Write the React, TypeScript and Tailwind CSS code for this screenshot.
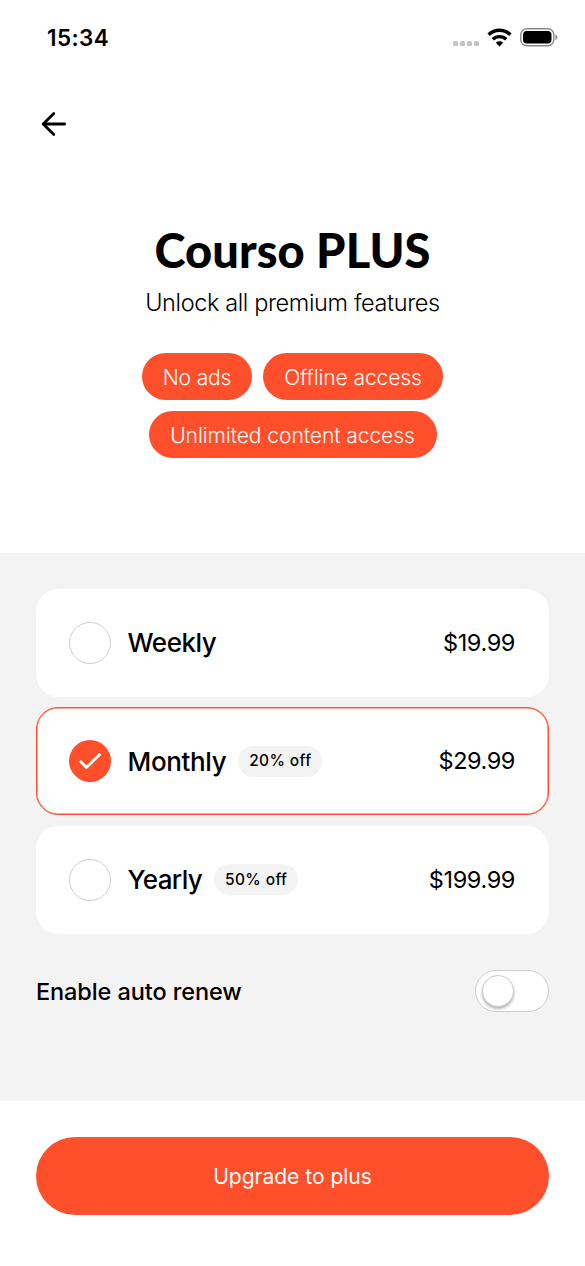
import { useState } from "react";

type Plan = {
  id: string;
  name: string;
  price: string;
  discount?: string;
  nameClass: string;
  priceClass: string;
};

const FEATURES = [
  { label: "No ads", box: "w-[110px]", text: "tracking-[-0.15px]" },
  { label: "Offline access", box: "w-[180px]", text: "tracking-[-0.1px]" },
  { label: "Unlimited content access", box: "w-[288px]", text: "tracking-[-0.05px]" },
];

const PLANS: Plan[] = [
  { id: "weekly", name: "Weekly", price: "$19.99", nameClass: "tracking-[-0.45px]", priceClass: "tracking-[-0.4px]" },
  { id: "monthly", name: "Monthly", price: "$29.99", discount: "20% off", nameClass: "tracking-[-0.35px]", priceClass: "tracking-[-0.45px]" },
  { id: "yearly", name: "Yearly", price: "$199.99", discount: "50% off", nameClass: "tracking-[-0.6px]", priceClass: "tracking-[-0.4px]" },
];

export default function App() {
  const [selected, setSelected] = useState("monthly");
  const [autoRenew, setAutoRenew] = useState(false);

  return (
    <div className="flex h-[1266px] w-[585px] flex-col overflow-hidden bg-white font-['Inter',sans-serif] text-black">
      <StatusBar />

      <div className="flex h-[98px] items-center px-[41px]">
        <button aria-label="Back">
          <svg width="26" height="26" viewBox="0 0 26 26" fill="none" stroke="currentColor" strokeWidth="2.8" strokeLinecap="round" strokeLinejoin="round">
            <path d="M23.6 13H2.2M12.8 2.4L2.2 13l10.6 10.6" />
          </svg>
        </button>
      </div>

      <header className="flex h-[380px] flex-col items-center pt-[49px]">
        <h1 className="font-['Lato',sans-serif] text-[47px] leading-[56px] font-black tracking-[0.1px] whitespace-nowrap">Courso PLUS</h1>
        <p className="mt-[10px] text-[23.5px] leading-[30px] font-light tracking-[-0.38px] whitespace-nowrap">Unlock all premium features</p>
        <div className="mt-[35px] flex w-[320px] flex-wrap justify-center gap-x-[11px] gap-y-[11px]">
          {FEATURES.map((f) => (
            <div key={f.label} className={`flex h-[47px] items-center justify-center rounded-full bg-[#ff4f2b] pt-[2px] ${f.box}`}>
              <span className={`text-[21px] font-light whitespace-nowrap text-white ${f.text}`}>{f.label}</span>
            </div>
          ))}
        </div>
      </header>

      <section className="h-[548px] bg-[#f3f3f3] px-[36px] pt-[35.5px]">
        <div className="flex flex-col gap-[10.5px]">
          {PLANS.map((plan) => (
            <PlanCard key={plan.id} plan={plan} active={selected === plan.id} onSelect={() => setSelected(plan.id)} />
          ))}
        </div>

        <div className="mt-[36.5px] flex items-center justify-between">
          <span className="pt-[2px] text-[23.5px] font-medium tracking-[-0.1px]">Enable auto renew</span>
          <Toggle on={autoRenew} onChange={setAutoRenew} />
        </div>
      </section>

      <footer className="px-[36px] pt-[36px]">
        <button className="flex h-[78px] w-full items-center justify-center rounded-full bg-[#ff4f2b] pt-[2px]">
          <span className="text-[21px] text-white">Upgrade to plus</span>
        </button>
      </footer>
    </div>
  );
}

function StatusBar() {
  return (
    <div className="flex h-[75px] items-center justify-between pr-[27px] pl-[47px]">
      <span className="text-[22.5px] font-semibold tracking-[0.4px]">15:34</span>
      <div className="flex items-center">
        <div className="mt-[12px] mr-[8px] flex gap-[2.3px]">
          {[0, 1, 2, 3].map((i) => (
            <span key={i} className="size-[4.8px] rounded-[1.5px] bg-[#c4c4c4]" />
          ))}
        </div>
        <svg width="25" height="19" viewBox="0 0 25 19" className="mr-[8px]" fill="none" stroke="#000" strokeWidth="3.4">
          <path d="M1.6 6.7a15.6 15.6 0 0 1 21.8 0M5.8 11.3a9.7 9.7 0 0 1 13.4 0" />
          <path d="M8.8 14.8a5.4 5.4 0 0 1 7.4 0L12.5 18.4z" fill="#000" stroke="none" />
        </svg>
        <svg width="38" height="19" viewBox="0 0 38 19" fill="none">
          <rect x="0.8" y="0.8" width="33" height="16.9" rx="5.8" stroke="#8a8a8a" strokeWidth="1.4" />
          <rect x="3" y="3" width="28.5" height="12.5" rx="3.8" fill="#000" />
          <path d="M35.4 6.6c2.5.8 2.5 4.8 0 5.6z" fill="#8a8a8a" />
        </svg>
      </div>
    </div>
  );
}

function PlanCard({ plan, active, onSelect }: { plan: Plan; active: boolean; onSelect: () => void }) {
  return (
    <button
      onClick={onSelect}
      className={`flex h-[108px] w-full items-center rounded-[22px] border bg-white pr-[33px] pl-[32px] ${
        active ? "border-[#ff4f2b] shadow-[inset_0_0_0_0.5px_#ff4f2b]" : "border-white"
      }`}
    >
      {active ? (
        <span className="flex size-[42px] items-center justify-center rounded-full bg-[#ff4f2b]">
          <svg width="24" height="20" viewBox="0 0 24 20" fill="none" stroke="#fff" strokeWidth="2.8" strokeLinecap="round" strokeLinejoin="round">
            <path d="M2.8 10.8l5.6 5.6L21.6 3.5" />
          </svg>
        </span>
      ) : (
        <span className="size-[42px] rounded-full border border-[#cfcfcf]" />
      )}
      <span className={`ml-[16.5px] text-[26px] font-medium ${plan.nameClass}`}>{plan.name}</span>
      {plan.discount && (
        <span className="ml-[12px] flex h-[31px] w-[84px] items-center justify-center rounded-full bg-[#f3f3f3] text-[15.5px] font-medium tracking-[0.4px] whitespace-nowrap">
          {plan.discount}
        </span>
      )}
      <span className={`ml-auto text-[23.5px] ${plan.priceClass}`}>{plan.price}</span>
    </button>
  );
}

function Toggle({ on, onChange }: { on: boolean; onChange: (v: boolean) => void }) {
  return (
    <button
      role="switch"
      aria-checked={on}
      onClick={() => onChange(!on)}
      className={`flex h-[42px] w-[74px] items-center rounded-full border border-[#cfcfcf] px-[6px] ${
        on ? "justify-end bg-[#ff4f2b]" : "bg-white"
      }`}
    >
      <span className="size-[32px] rounded-full border border-[#cfcfcf] bg-white shadow-[0_2px_3px_rgba(0,0,0,0.3)]" />
    </button>
  );
}
